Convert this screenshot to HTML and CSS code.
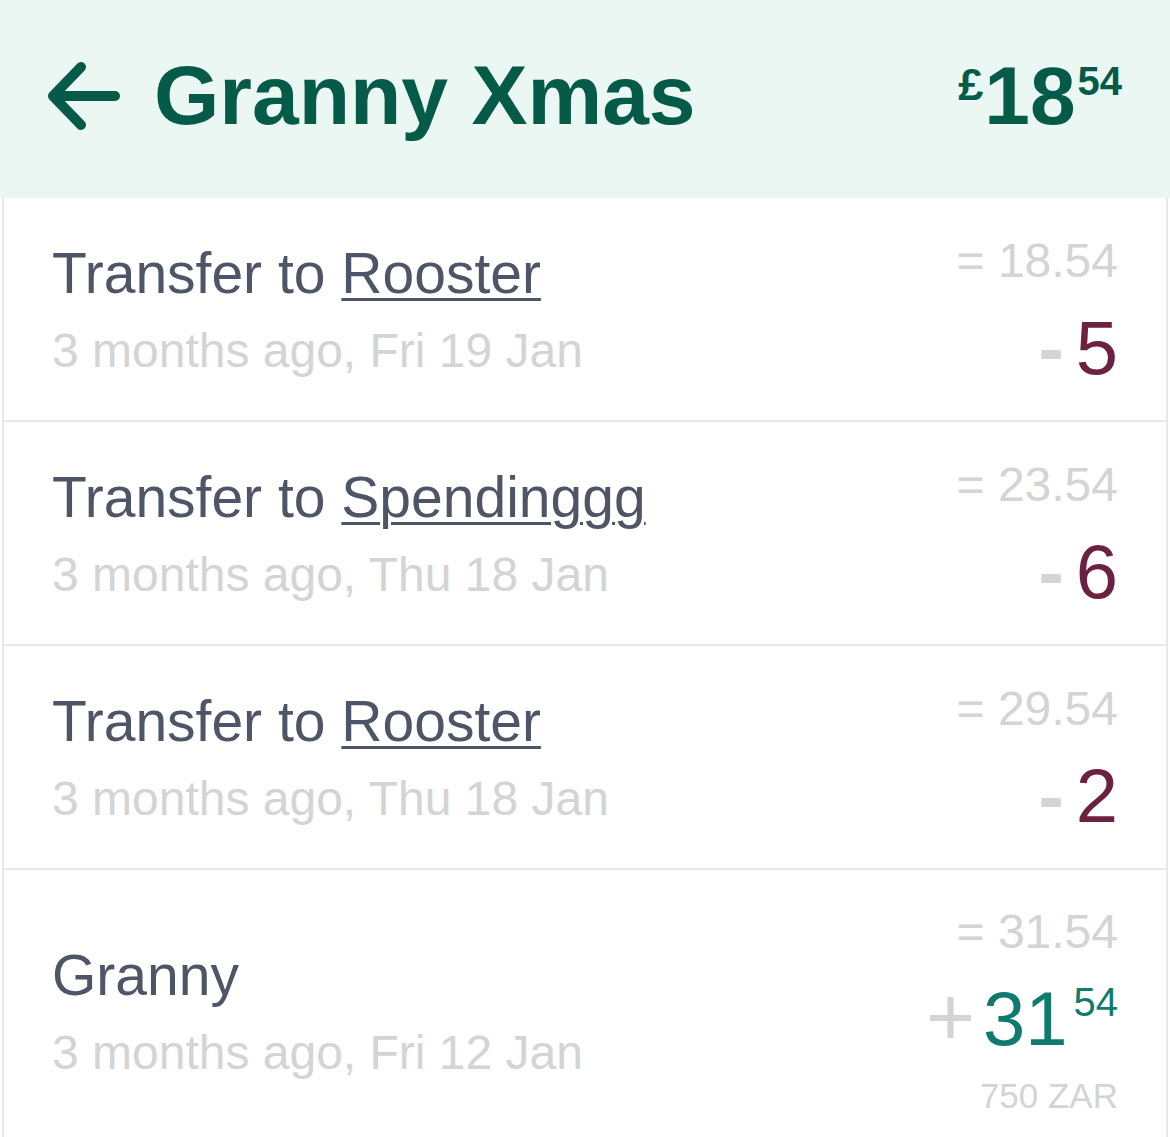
FILE: index.html
```html
<!DOCTYPE html>
<html>
  <head>
    <title>Granny Xmas</title>
    <link rel="stylesheet" href="styles.css">
  </head>
  <body>
    <div class="header">
      <a class="back" href="#">
        <svg width="80" height="72" viewBox="0 0 80 72">
          <path d="M9 36 H71 M37 7 L9 36 L37 65" fill="none" stroke="#065a48" stroke-width="10" stroke-linecap="round" stroke-linejoin="round"/>
        </svg>
      </a>
      <h1 class="title">Granny Xmas</h1>
      <div class="balance">
        <span class="cur">£</span><span class="whole">18</span><span class="cents">54</span>
      </div>
    </div>

    <div class="list">
      <div class="row">
        <div class="info">
          <div class="name">Transfer to <a href="#">Rooster</a></div>
          <div class="when">3 months ago, Fri 19 Jan</div>
        </div>
        <div class="amounts">
          <div class="running">= 18.54</div>
          <div class="amount out"><span class="sign">-</span>5</div>
        </div>
      </div>
      <div class="row">
        <div class="info">
          <div class="name">Transfer to <a href="#">Spendinggg</a></div>
          <div class="when">3 months ago, Thu 18 Jan</div>
        </div>
        <div class="amounts">
          <div class="running">= 23.54</div>
          <div class="amount out"><span class="sign">-</span>6</div>
        </div>
      </div>
      <div class="row">
        <div class="info">
          <div class="name">Transfer to <a href="#">Rooster</a></div>
          <div class="when">3 months ago, Thu 18 Jan</div>
        </div>
        <div class="amounts">
          <div class="running">= 29.54</div>
          <div class="amount out"><span class="sign">-</span>2</div>
        </div>
      </div>
      <div class="row">
        <div class="info">
          <div class="name">Granny</div>
          <div class="when">3 months ago, Fri 12 Jan</div>
        </div>
        <div class="amounts">
          <div class="running">= 31.54</div>
          <div class="amount in"><span class="sign plus">+</span>31<span class="sup">54</span></div>
          <div class="foreign">750 ZAR</div>
        </div>
      </div>
    </div>
  </body>
</html>
```

FILE: styles.css
```css
body {
  margin: 0;
  font-family: "Liberation Sans", Arial, sans-serif;
  background: #fff;
}
.header {
  display: flex;
  align-items: center;
  height: 198px;
  padding: 0 48px 8px 44px;
  background-color: #eaf7f3;
  color: #065a48;
  box-sizing: border-box;
}
.back {
  display: flex;
  margin-top: 2px;
}
.title {
  margin: 0 0 0 30px;
  font-size: 84px;
  font-weight: bold;
  line-height: 1;
  flex: 1;
}
.balance {
  font-weight: bold;
  display: flex;
  align-items: flex-start;
  margin-top: 8px;
}
.balance .cur {
  font-size: 45px;
  line-height: 1;
  margin-top: 1px;
  margin-right: 1px;
}
.balance .whole {
  font-size: 82px;
  line-height: 82px;
  margin-top: -6px;
}
.balance .cents {
  font-size: 40px;
  line-height: 1;
  margin-left: 2px;
}
.list {
  margin: 0 2px;
  border-left: 2px solid #e6e7ef;
  border-right: 2px solid #e6e7ef;
}
.row {
  display: flex;
  align-items: center;
  justify-content: space-between;
  padding: 34px 48px 22px 48px;
  border-bottom: 2px solid #e8e9f0;
  min-height: 224px;
  box-sizing: border-box;
}
.name {
  font-size: 57px;
  line-height: 72px;
  color: #4e5567;
}
.name a {
  color: #4e5567;
  text-decoration: underline;
  text-decoration-thickness: 3px;
  text-underline-offset: 5px;
}
.when {
  font-size: 48px;
  line-height: 84px;
  color: #d4d4d4;
}
.amounts {
  text-align: right;
}
.running {
  font-size: 48px;
  line-height: 56px;
  color: #d4d4d4;
}
.amount {
  font-size: 76px;
  line-height: 100px;
  margin-top: 9px;
}
.amount.out {
  color: #6b213f;
}
.amount.in {
  color: #0e7b6d;
}
.sign {
  color: #d4d4d4;
  font-weight: bold;
  margin-right: 12px;
}
.sign.plus {
  font-weight: normal;
  font-size: 84px;
  line-height: 0;
  margin-right: 8px;
}
.sup {
  display: inline-block;
  vertical-align: top;
  font-size: 40px;
  line-height: 66px;
  margin-left: 6px;
}
.foreign {
  font-size: 35px;
  line-height: 44px;
  margin: 5px 0 12px;
  color: #d4d4d4;
}
```
